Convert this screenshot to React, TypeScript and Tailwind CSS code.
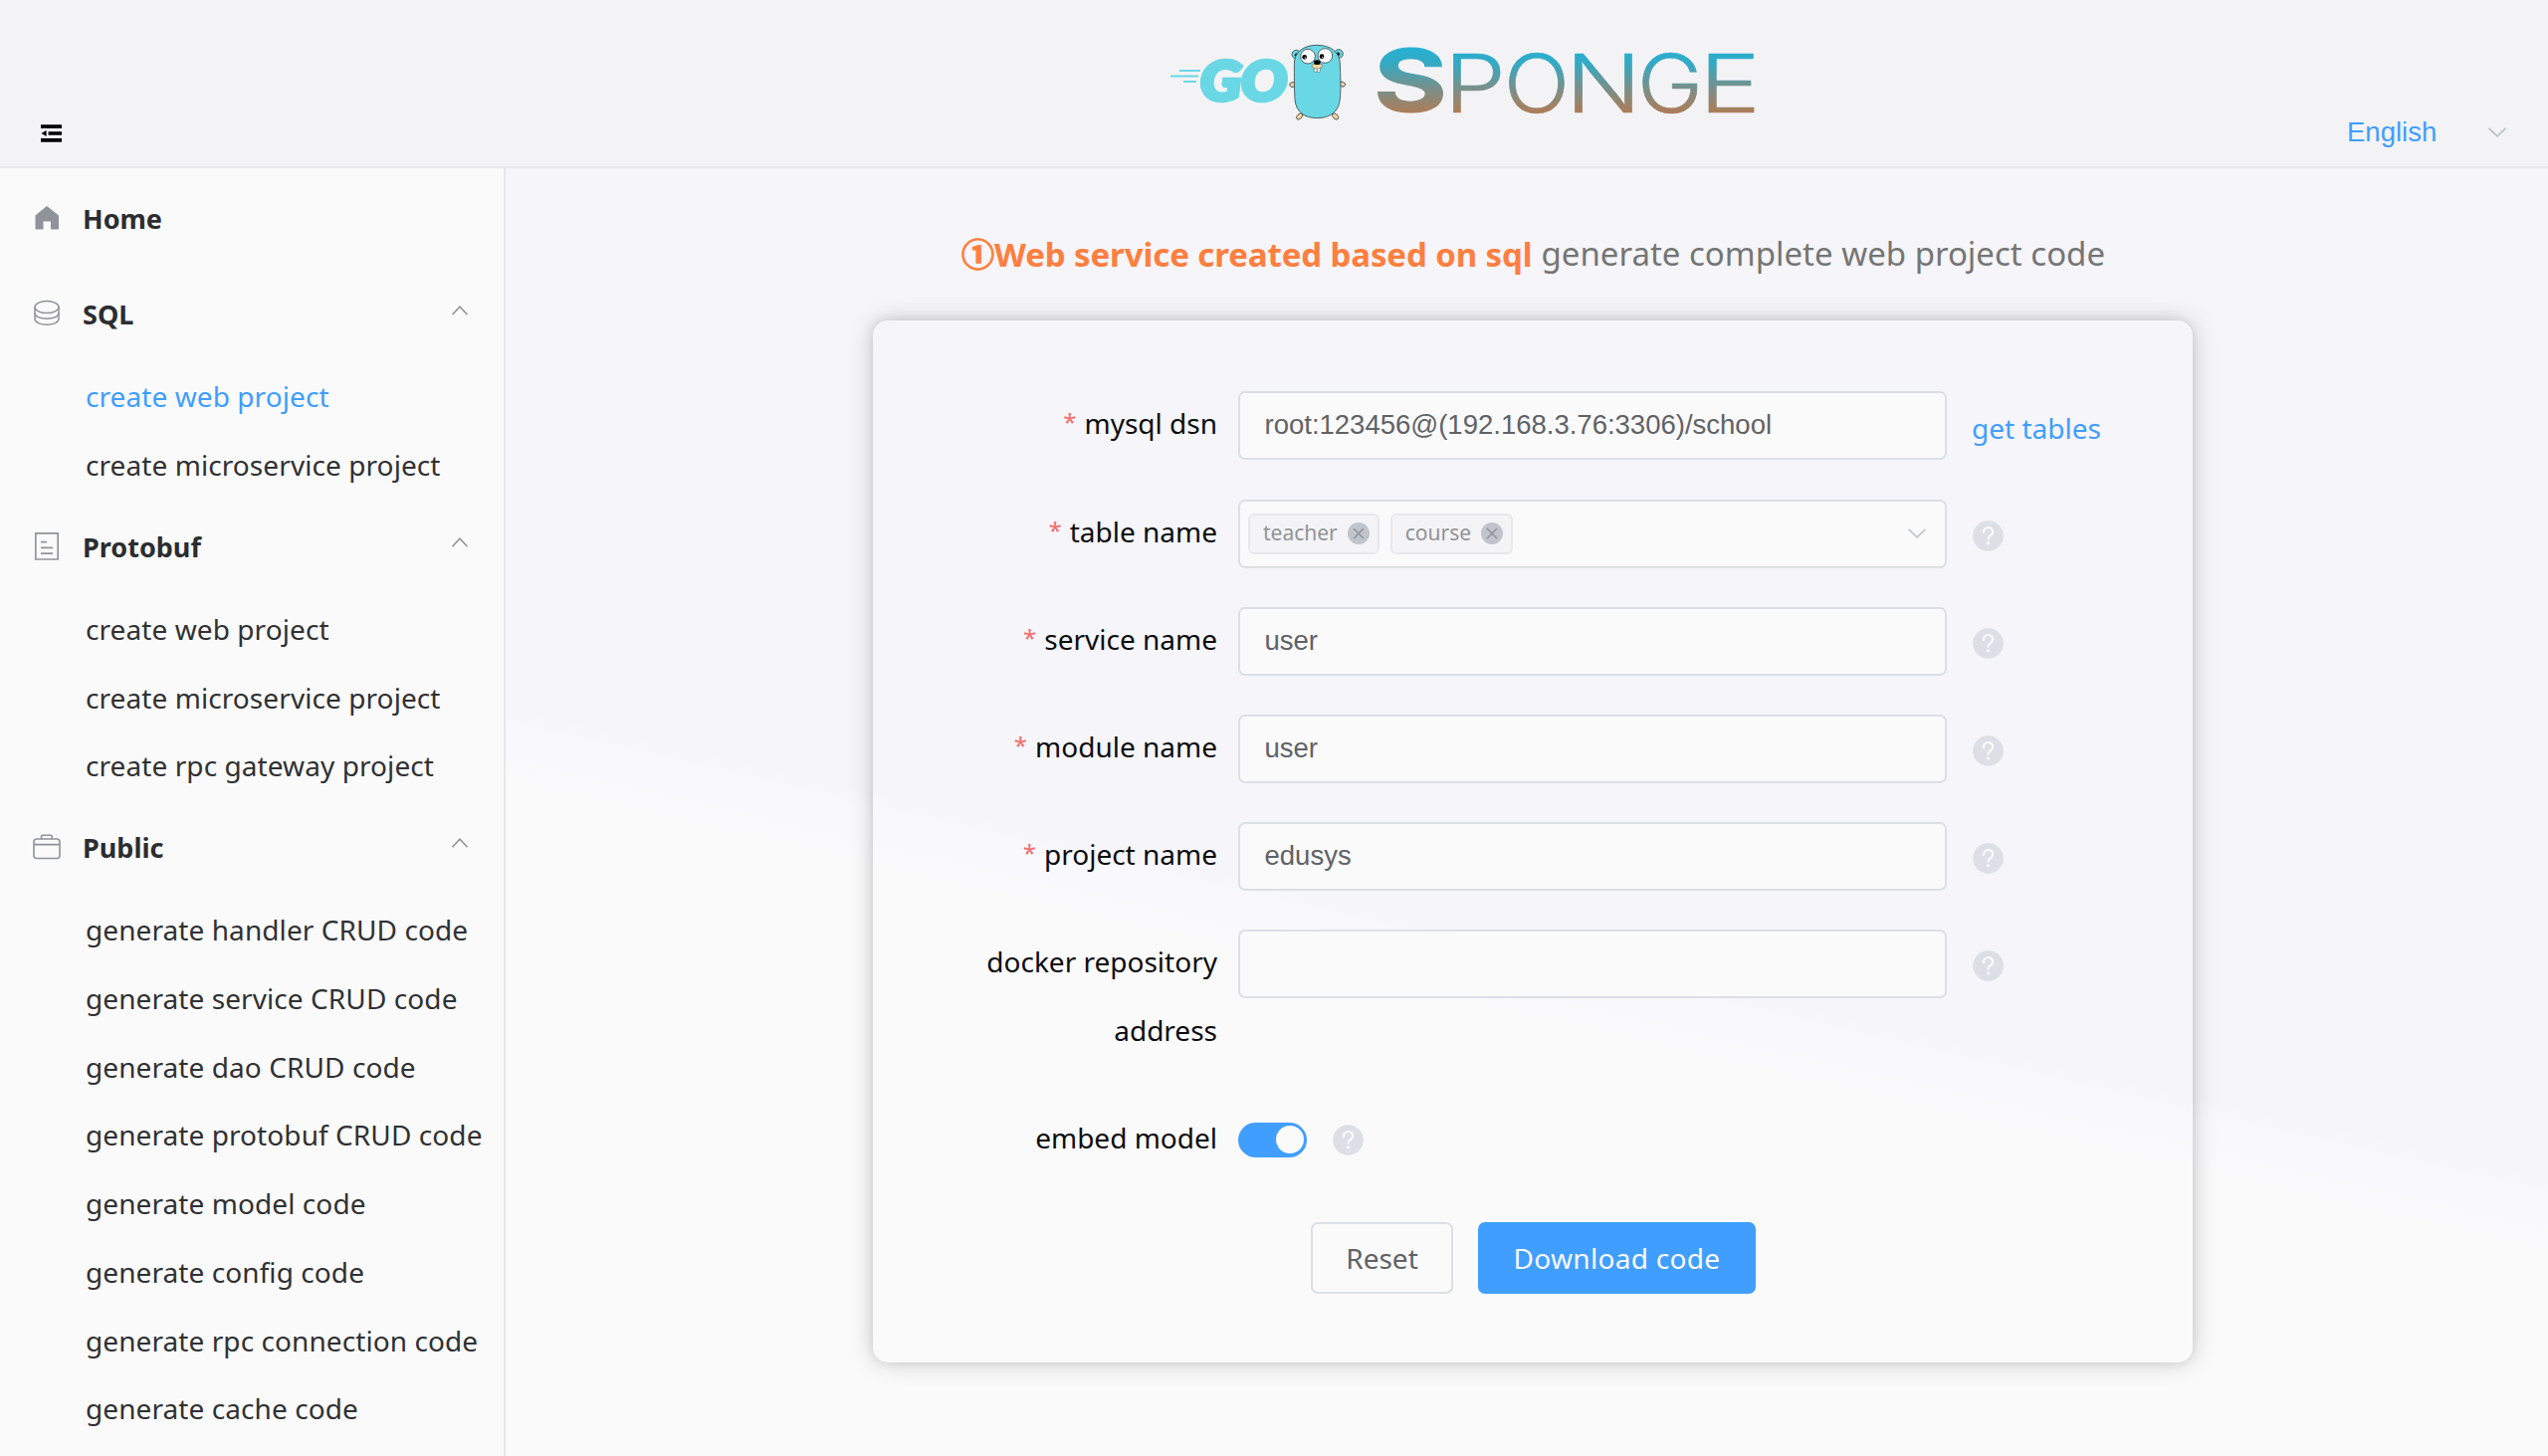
import { ReactNode } from "react";

const NOTO = "font-['Noto_Sans','Noto_Sans_CJK_SC',sans-serif]";
const ARIAL = "font-['Liberation_Sans',Arial,sans-serif]";

function Gopher() {
  return (
    <g transform="scale(0.33333)" stroke="#3c4a4d" strokeWidth="2.5">
      <circle cx="397" cy="56" r="13" fill="#6ad7e5" />
      <circle cx="525" cy="54" r="13" fill="#6ad7e5" />
      <circle cx="398" cy="58" r="5" fill="#111" />
      <circle cx="523" cy="55" r="5" fill="#111" />
      <ellipse cx="386" cy="147" rx="9" ry="7" fill="#f6d2a2" transform="rotate(-20 386 147)" />
      <ellipse cx="536" cy="146" rx="9" ry="7" fill="#f6d2a2" transform="rotate(20 536 146)" />
      <ellipse cx="407" cy="243" rx="11" ry="7" fill="#f6d2a2" transform="rotate(-45 407 243)" />
      <ellipse cx="515" cy="243" rx="11" ry="7" fill="#f6d2a2" transform="rotate(45 515 243)" />
      <path
        d="M391 84C391 50 418 28 460 28C500 28 528 48 529 84C530 120 533 150 529 190C526 228 500 248 460 248C420 248 396 228 393 192C390 150 392 120 391 84Z"
        fill="#6ad7e5"
      />
      <circle cx="432" cy="62" r="22" fill="#fff" />
      <circle cx="484" cy="60" r="22" fill="#fff" />
      <circle cx="422" cy="64" r="7" fill="#000" stroke="none" />
      <circle cx="474" cy="62" r="7" fill="#000" stroke="none" />
      <circle cx="424" cy="66" r="2" fill="#fff" stroke="none" />
      <circle cx="476" cy="64" r="2" fill="#fff" stroke="none" />
      <rect x="451" y="93" width="9" height="16" rx="3" fill="#fff" strokeWidth="1.5" />
      <rect x="460" y="93" width="9" height="16" rx="3" fill="#fff" strokeWidth="1.5" />
      <ellipse cx="460" cy="91" rx="16" ry="8" fill="#f6d2a2" strokeWidth="1.5" />
      <ellipse cx="460" cy="80" rx="10" ry="7" fill="#000" stroke="none" />
    </g>
  );
}

const WORDMARK: [string, number, number][] = [
  ["P", 281, 62],
  ["O", 341, 66],
  ["N", 403, 76],
  ["G", 475, 66],
  ["E", 537, 62],
];

function Logo() {
  return (
    <svg width="600" height="140" viewBox="0 -24 600 140" className="block">
      <defs>
        <linearGradient id="mark" gradientUnits="userSpaceOnUse" x1="0" y1="12" x2="0" y2="77">
          <stop offset="0" stopColor="#26b0d3" />
          <stop offset="0.25" stopColor="#35a9c3" />
          <stop offset="0.6" stopColor="#74918e" />
          <stop offset="1" stopColor="#ad7c58" />
        </linearGradient>
      </defs>
      <path d="M15 35H36M6 40.5H34M19 46H32" stroke="#6ad7e5" strokeWidth="2" />
      <text
        x="36"
        y="64.5"
        textLength="87"
        lengthAdjust="spacingAndGlyphs"
        fontSize="56"
        fill="#6ad7e5"
        stroke="#6ad7e5"
        strokeWidth="4.5"
        className="font-['Lato'] font-black italic"
      >
        GO
      </text>
      <Gopher />
      <g fill="url(#mark)" stroke="url(#mark)">
        <text x="210" y="76" textLength="74" lengthAdjust="spacingAndGlyphs" fontSize="86" strokeWidth="1" className="font-['Inter'] font-bold">
          S
        </text>
        {WORDMARK.map(([ch, x, w]) => (
          <text key={ch} x={x} y="77" textLength={w} lengthAdjust="spacingAndGlyphs" fontSize="81" strokeWidth="0.6" className="font-['Inter'] font-light">
            {ch}
          </text>
        ))}
      </g>
    </svg>
  );
}

function Chevron({ up = false, color = "#909399", w = 18 }: { up?: boolean; color?: string; w?: number }) {
  return (
    <svg width={w} height="10" viewBox="0 0 18 10" preserveAspectRatio="none" fill="none" stroke={color} strokeWidth="1.6">
      <path d={up ? "M0.6 9.2L9 1.2L17.4 9.2" : "M0.6 0.8L9 8.8L17.4 0.8"} />
    </svg>
  );
}

const icons: Record<string, ReactNode> = {
  Home: (
    <svg width="28" height="28" viewBox="0 0 28 28" fill="#909399">
      <path d="M14 2L26 11.5V25.5H18V17.5H10.5V25.5H2.5V11.5Z" />
    </svg>
  ),
  SQL: (
    <svg width="28" height="28" viewBox="0 0 28 28" fill="none" stroke="#909399" strokeWidth="1.5">
      <ellipse cx="14" cy="7.6" rx="12" ry="6" />
      <path d="M2 7.6V13.4C2 17 7 19.2 14 19.2S26 17 26 13.4V7.6" />
      <path d="M2 13.4V19.2C2 22.8 7 25.2 14 25.2S26 22.8 26 19.2V13.4" />
    </svg>
  ),
  Protobuf: (
    <svg width="28" height="28" viewBox="0 0 28 28" fill="none" stroke="#909399" strokeWidth="1.7">
      <path d="M2.8 0.9H25.2V27H2.8ZM8 9.7H14M8 15.4H20M8 21.2H20" />
    </svg>
  ),
  Public: (
    <svg width="28" height="28" viewBox="0 0 28 28" fill="none" stroke="#909399" strokeWidth="1.6">
      <rect x="1" y="6" width="26" height="19.5" rx="3" />
      <path d="M1 11.6H27M8.5 6V3.4A1.2 1.2 0 0 1 9.7 2.2H18A1.2 1.2 0 0 1 19.2 3.4V6" />
    </svg>
  ),
};

const menu: { title: string; items: string[] }[] = [
  { title: "Home", items: [] },
  { title: "SQL", items: ["create web project", "create microservice project"] },
  { title: "Protobuf", items: ["create web project", "create microservice project", "create rpc gateway project"] },
  {
    title: "Public",
    items: [
      "generate handler CRUD code",
      "generate service CRUD code",
      "generate dao CRUD code",
      "generate protobuf CRUD code",
      "generate model code",
      "generate config code",
      "generate rpc connection code",
      "generate cache code",
    ],
  },
];

function Sidebar() {
  return (
    <aside className="w-[508px] shrink-0 overflow-hidden border-r-2 border-[#e7e7e9] bg-[#fafafb] pt-[3px]">
      {menu.map((g) => (
        <section key={g.title}>
          <div className="flex h-[96px] items-center pr-[36px] pl-[33px]">
            <span className="mb-[2px]">{icons[g.title]}</span>
            <span className="ml-[22px] flex-1 pt-px text-[27px] font-bold text-[#2b2d30]">{g.title}</span>
            {g.items.length > 0 && (
              <span className="mb-[9px] flex">
                <Chevron up w={16} />
              </span>
            )}
          </div>
          {g.items.map((t, i) => (
            <div
              key={t}
              className={`flex h-[68.75px] items-center pl-[86px] text-[28px] tracking-[0.08px] whitespace-nowrap ${
                g.title === "SQL" && i === 0 ? "text-[#409eff]" : "text-[#303133]"
              }`}
            >
              {t}
            </div>
          ))}
        </section>
      ))}
    </aside>
  );
}

function Help() {
  return (
    <svg width="31" height="31" viewBox="0 0 31 31" fill="none">
      <circle cx="15.5" cy="15.5" r="15.3" fill="#dcdfe6" />
      <path d="M10.9 12.2C10.9 5.2 20.2 5.6 20.2 11.6C20.2 15.2 15.5 15 15.5 18.6" stroke="#fafafb" strokeWidth="2.2" strokeLinecap="round" />
      <circle cx="15.5" cy="22.8" r="1.6" fill="#fafafb" />
    </svg>
  );
}

function Tag({ children }: { children: ReactNode }) {
  return (
    <span className="flex h-[41px] items-center rounded-[6px] border-2 border-[#e9e9eb] bg-[#f4f4f6] pr-[8px] pl-[13px] text-[21px] text-[#909399]">
      {children}
      <svg width="22" height="22" viewBox="0 0 22 22" className="ml-[10px]">
        <circle cx="11" cy="11" r="11" fill="#c0c4cc" />
        <path d="M6 6L16 16M16 6L6 16" stroke="#909399" strokeWidth="1.5" />
      </svg>
    </span>
  );
}

function Row({
  label,
  required,
  tall,
  side,
  children,
}: {
  label: string;
  required?: boolean;
  tall?: boolean;
  side?: ReactNode;
  children: ReactNode;
}) {
  return (
    <div className={`flex items-start ${tall ? "h-[138px]" : "h-[69px]"}`}>
      <label className="-mt-[1.5px] w-[346px] pl-[90px] text-right text-[28px] leading-[69px] text-[#0c0c0d]">
        {required && <span className="mr-[8px] align-[3.5px] text-[24px] leading-none text-[#f56c6c]">*</span>}
        {label}
      </label>
      <div className="ml-[21px] flex h-[69px] items-center">{children}</div>
      {side}
    </div>
  );
}

function Field({ children }: { children?: ReactNode }) {
  return (
    <div
      className={`flex h-[69px] w-[712px] items-center rounded-[7px] border-2 border-[#dcdfe6] bg-[#fafafb] pl-[24.5px] text-[27.5px] text-[#606266] ${ARIAL}`}
    >
      {children}
    </div>
  );
}

const help = (
  <span className="mt-[21px] ml-[26px]">
    <Help />
  </span>
);

export default function App() {
  return (
    <div className={`flex h-[1463px] w-[2560px] flex-col overflow-hidden bg-[#f5f5fa] ${NOTO}`}>
      <header className="grid h-[169px] shrink-0 grid-cols-[1170px_600px_1fr] border-b-2 border-[#e8e8ea] bg-[#f3f3f6]">
        <div className="pt-[125px] pl-[41px]">
          <svg width="21" height="18" viewBox="0 0 21 18" fill="#000">
            <path d="M0 0.3H21V4H0ZM7.6 7.2H21V10.8H7.6ZM0 14H21V17.7H0ZM0.5 9L5.6 5.9V12.1Z" />
          </svg>
        </div>
        <div className="pt-[12px]">
          <Logo />
        </div>
        <div className={`mt-[115px] flex h-[36px] items-center justify-between self-start pr-[42px] pl-[588px] text-[27.5px] text-[#409eff] ${ARIAL}`}>
          English
          <Chevron color="#b8bfc9" />
        </div>
      </header>

      <div className="flex min-h-0 flex-1">
        <Sidebar />
        <main className="flex-1 bg-[linear-gradient(193deg,#f5f5fa_57.5%,#f8f8fd_58.5%,#f9f9fd_60%,#fafafb_61.5%)]">
          <h1 className="flex h-[153px] items-center pt-[18px] pl-[458px] text-[33px] leading-none whitespace-nowrap text-[#757575]">
            <span className="font-bold text-[#ff7f3f]">
              <span className="font-['Noto_Sans_CJK_SC'] [-webkit-text-stroke:1.2px_#ff7f3f]">①</span>
              <span className="tracking-[-0.1px]">Web service created based on sql</span>
            </span>
            <span className="ml-[9px]">generate complete web project code</span>
          </h1>

          <div className="ml-[369px] flex h-[1047px] w-[1326px] flex-col gap-[39px] rounded-[15px] pt-[70.5px] shadow-[0_0_24px_rgba(0,0,0,0.2),0_0_8px_rgba(0,0,0,0.08)]">
            <div className="mb-[1px]">
              <Row label="mysql dsn" required side={<span className="mt-[3px] ml-[25px] text-[28px] leading-[69px] text-[#409eff]">get tables</span>}>
                <Field>root:123456@(192.168.3.76:3306)/school</Field>
              </Row>
            </div>
            <Row label="table name" required side={help}>
              <div className="flex h-[69px] w-[712px] items-center gap-[11px] rounded-[7px] border-2 border-[#dcdfe6] bg-[#fafafb] pr-[19px] pl-[8px]">
                <Tag>teacher</Tag>
                <Tag>course</Tag>
                <span className="ml-auto">
                  <Chevron color="#c0c4cc" />
                </span>
              </div>
            </Row>
            <Row label="service name" required side={help}>
              <Field>user</Field>
            </Row>
            <Row label="module name" required side={help}>
              <Field>user</Field>
            </Row>
            <Row label="project name" required side={help}>
              <Field>edusys</Field>
            </Row>
            <Row label="docker repository address" tall side={help}>
              <Field />
            </Row>
            <Row label="embed model">
              <span className="flex h-[35px] w-[69px] items-center justify-end rounded-full bg-[#409eff] pr-[3px]">
                <span className="size-[28px] rounded-full bg-[#fafafb]" />
              </span>
              <span className="ml-[26px]">
                <Help />
              </span>
            </Row>
            <div className="mt-[9px] ml-[440px] flex gap-[25px] text-[28px]">
              <button className="h-[72px] w-[143px] rounded-[7px] border-2 border-[#dcdfe6] text-[#606266]">Reset</button>
              <button className="h-[72px] w-[279px] rounded-[7px] bg-[#409eff] tracking-[0.3px] text-[#fafafb]">Download code</button>
            </div>
          </div>
        </main>
      </div>
    </div>
  );
}
